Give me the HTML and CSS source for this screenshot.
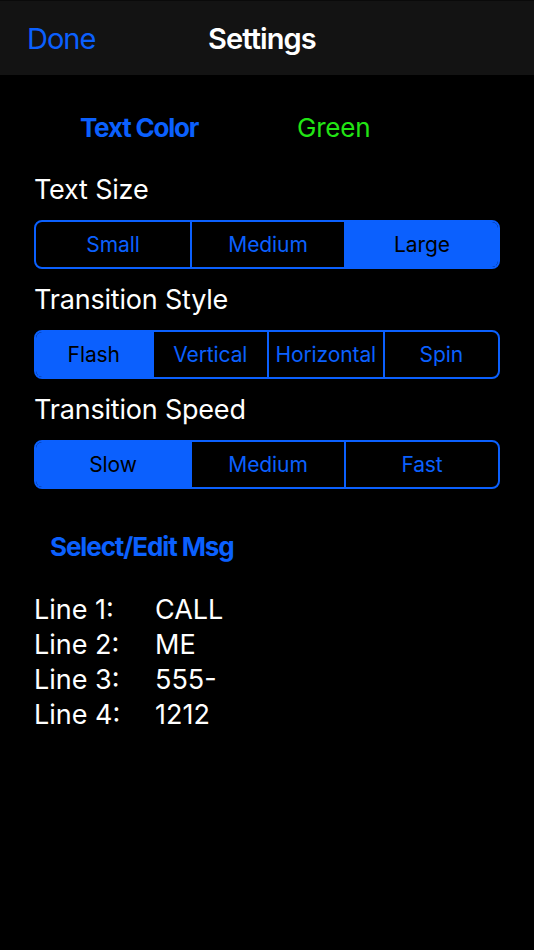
FILE: index.html
```html
<!DOCTYPE html>
<html lang="en">
<head>
<meta charset="utf-8">
<title>Settings</title>
<link rel="stylesheet" href="styles.css">
</head>
<body>
<div class="screen">
  <header class="nav">
    <div class="nav-left"><span class="nav-done">Done</span></div>
    <div class="nav-title">Settings</div>
  </header>

  <main class="content">
    <div class="color-row">
      <span class="color-label">Text Color</span>
      <span class="color-value">Green</span>
    </div>

    <div class="label">Text Size</div>
    <div class="seg seg-3">
      <div class="seg-item">Small</div>
      <div class="seg-item">Medium</div>
      <div class="seg-item active">Large</div>
    </div>

    <div class="label">Transition Style</div>
    <div class="seg seg-4">
      <div class="seg-item active">Flash</div>
      <div class="seg-item">Vertical</div>
      <div class="seg-item">Horizontal</div>
      <div class="seg-item">Spin</div>
    </div>

    <div class="label">Transition Speed</div>
    <div class="seg seg-3">
      <div class="seg-item active">Slow</div>
      <div class="seg-item">Medium</div>
      <div class="seg-item">Fast</div>
    </div>

    <div class="msg-title">Select/Edit Msg</div>

    <div class="lines">
      <div class="line-label">Line 1:</div><div class="line-value">CALL</div>
      <div class="line-label">Line 2:</div><div class="line-value">ME</div>
      <div class="line-label">Line 3:</div><div class="line-value">555-</div>
      <div class="line-label">Line 4:</div><div class="line-value">1212</div>
    </div>
  </main>
</div>
</body>
</html>
```

FILE: styles.css
```css
html, body {
  margin: 0;
  padding: 0;
  background: #000;
}

body {
  font-family: Inter, "Noto Sans", "Liberation Sans", sans-serif;
  color: #fff;
}

.screen {
  width: 534px;
  height: 950px;
  background: #000;
  overflow: hidden;
}

.nav {
  height: 74px;
  background: #131313;
  border-top: 1px solid #0a0a0a;
  display: flex;
  align-items: center;
  padding-left: 27px;
}

.nav-left {
  width: 181px;
}

.nav-done {
  color: #0b60fe;
  font-size: 29px;
  letter-spacing: -1px;
}

.nav-title {
  color: #fff;
  font-size: 29px;
  font-weight: 600;
  letter-spacing: -0.9px;
}

.content {
  padding: 0 34px;
}

.color-row {
  margin-top: 20px;
  height: 64px;
  display: flex;
  align-items: center;
  padding-left: 46px;
}

.color-label {
  width: 217px;
  color: #0b60fe;
  font-size: 26px;
  font-weight: 700;
  letter-spacing: -1.2px;
}

.color-value {
  color: #22e514;
  font-size: 26px;
  letter-spacing: -0.2px;
}

.label {
  height: 61px;
  line-height: 61px;
  font-size: 27px;
  letter-spacing: -0.2px;
}

.seg {
  height: 49px;
  box-sizing: border-box;
  border: 2px solid #0b60fe;
  border-radius: 8px;
  overflow: hidden;
  display: grid;
}

.seg-3 {
  grid-template-columns: repeat(3, 1fr);
}

.seg-4 {
  grid-template-columns: repeat(4, 1fr);
}

.seg-item {
  display: flex;
  align-items: center;
  justify-content: center;
  color: #0b60fe;
  font-size: 21px;
  letter-spacing: -0.1px;
  border-left: 2px solid #0b60fe;
}

.seg-item:first-child {
  border-left: none;
}

.seg-item.active {
  background: #0b60fe;
  color: #000;
}

.msg-title {
  margin-top: 38px;
  height: 40px;
  line-height: 40px;
  padding-left: 16px;
  color: #0b60fe;
  font-size: 26px;
  font-weight: 700;
  letter-spacing: -1.1px;
}

.lines {
  margin-top: 25px;
  display: grid;
  grid-template-columns: 121px 1fr;
  grid-auto-rows: 35px;
  line-height: 35px;
  font-size: 27px;
}
```
